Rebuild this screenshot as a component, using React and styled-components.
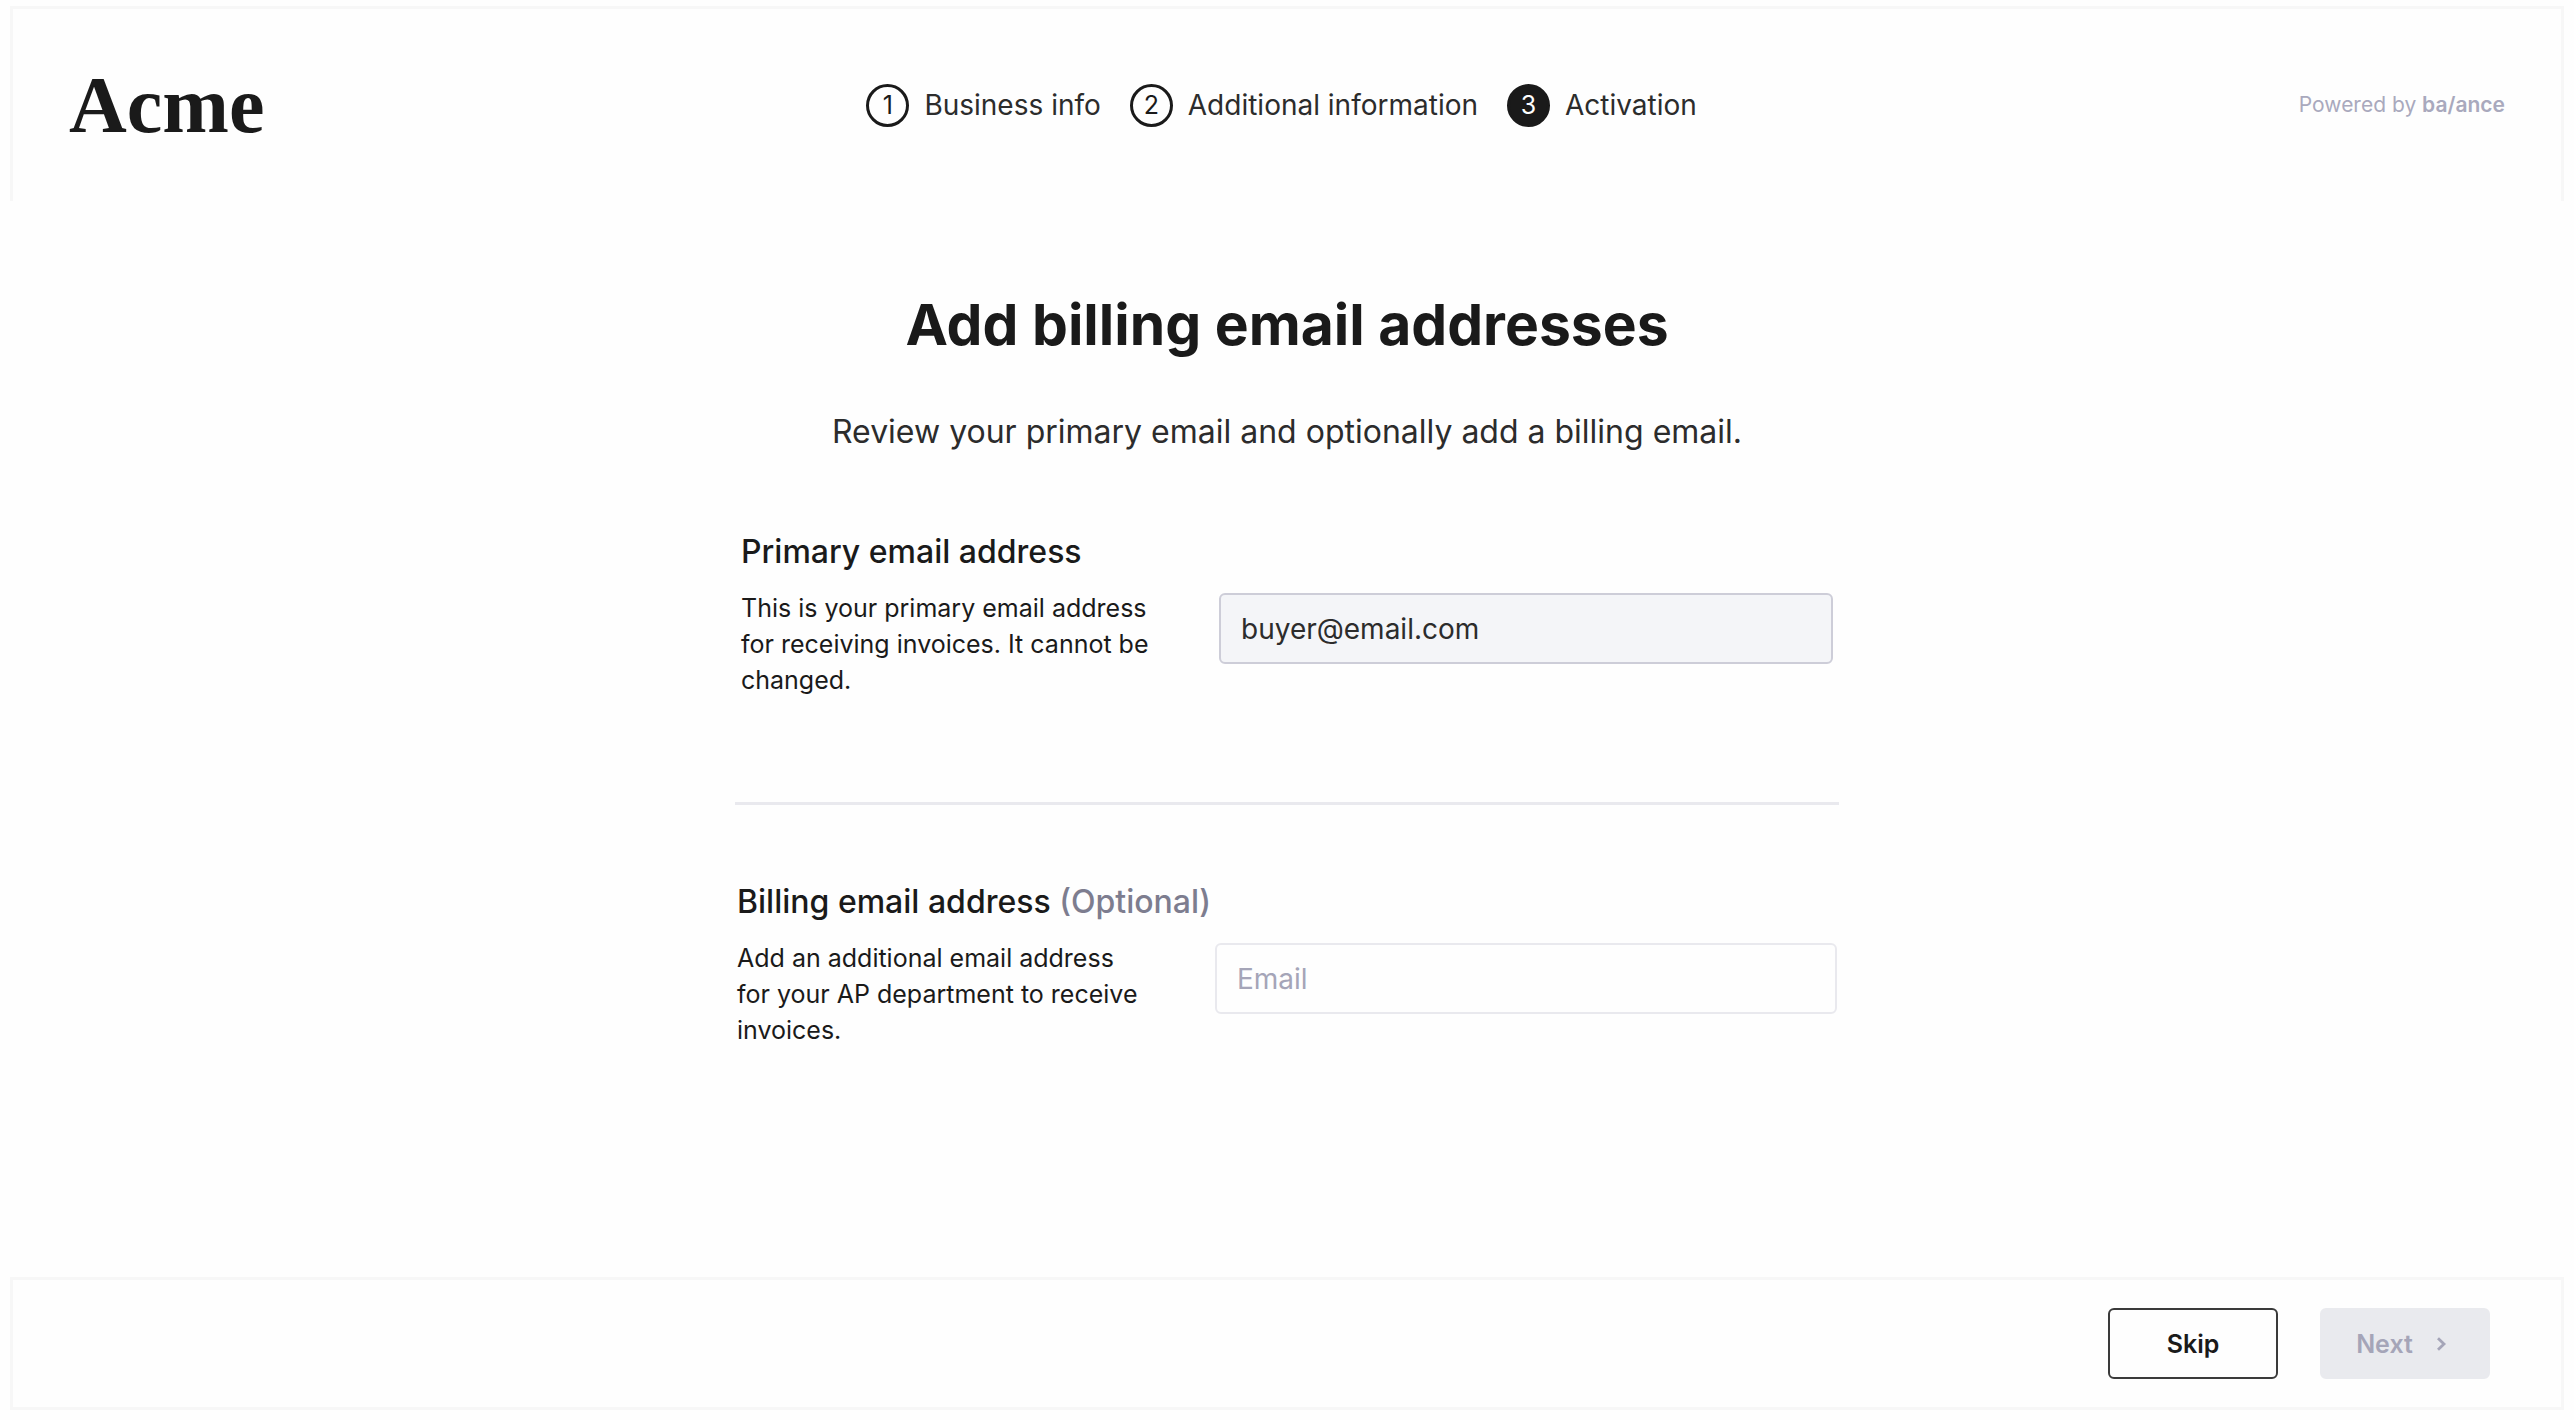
import React from "react";
import styled, { createGlobalStyle } from "styled-components";

const GlobalStyle = createGlobalStyle`
  *, *::before, *::after { box-sizing: border-box; }
  body {
    margin: 0;
    background: #fefefe;
    color: #1a1a1a;
    font-family: Inter, "Liberation Sans", sans-serif;
  }
`;

const Page = styled.div`
  display: flex;
  flex-direction: column;
  min-height: 100vh;
  padding: 6px 10px 10px;
`;

const Header = styled.header`
  display: flex;
  align-items: center;
  justify-content: space-between;
  min-height: 195px;
  padding: 0 56px;
  border: 3px solid #f7f7f7;
  border-bottom: 0;
`;

const Logo = styled.div`
  font-family: "Liberation Serif", serif;
  font-size: 80px;
  font-weight: 700;
  line-height: 88px;
`;

const Steps = styled.ol`
  display: flex;
  gap: 29px;
  margin: 0;
  padding: 0;
  list-style: none;
`;

const Step = styled.li`
  display: flex;
  align-items: center;
  gap: 15px;
  color: #2c2c2c;
  font-size: 28px;
  line-height: 40px;
`;

const StepNumber = styled.span`
  display: flex;
  align-items: center;
  justify-content: center;
  width: 43px;
  height: 43px;
  border: 3px solid #1a1a1a;
  border-radius: 50%;
  background: ${(p) => (p.$active ? "#1a1a1a" : "transparent")};
  color: ${(p) => (p.$active ? "#fefefe" : "#1a1a1a")};
  font-size: 25px;
`;

const PoweredBy = styled.div`
  color: #a9a9bd;
  font-size: 21px;
  line-height: 32px;
`;

const Brand = styled.span`
  font-weight: 600;
`;

const Main = styled.main`
  display: flex;
  flex: 1;
  flex-direction: column;
  align-items: center;
  padding: 90px 24px 80px;
`;

const Title = styled.h1`
  margin: 0 0 53px;
  font-size: 57px;
  font-weight: 700;
  line-height: 68px;
  text-align: center;
`;

const Subtitle = styled.p`
  margin: 0 0 80px;
  color: #2c2c2c;
  font-size: 32px;
  line-height: 40px;
  text-align: center;
`;

const Form = styled.form`
  width: 100%;
  max-width: 1104px;
`;

const Field = styled.div`
  display: grid;
  grid-template-columns: 478px 1fr;
  row-gap: 18px;
  padding: 0 ${(p) => p.$inset}px;
`;

const Label = styled.label`
  grid-column: 1 / -1;
  font-size: 32px;
  font-weight: 500;
  line-height: 40px;
`;

const Optional = styled.span`
  color: #7d7d8f;
`;

const Description = styled.p`
  max-width: 410px;
  margin: 0;
  font-size: 25px;
  line-height: 36px;
`;

const Input = styled.input`
  width: 100%;
  height: 71px;
  margin-top: 3px;
  padding: 0 20px;
  border: 2px solid #e9e9ee;
  border-radius: 6px;
  background: #fefefe;
  color: #2c2c2c;
  font: inherit;
  font-size: 28px;

  &::placeholder {
    color: #a5a5b8;
    opacity: 1;
  }

  &:read-only {
    border-color: #cdcdd8;
    background: #f4f5f8;
  }
`;

const Divider = styled.hr`
  height: 3px;
  margin: 104px 0 77px;
  border: 0;
  background: #e9e9ee;
`;

const Footer = styled.footer`
  display: flex;
  justify-content: flex-end;
  gap: 42px;
  padding: 28px 71px;
  border: 3px solid #f7f7f7;
`;

const Button = styled.button`
  display: flex;
  align-items: center;
  justify-content: center;
  gap: 23px;
  width: 170px;
  height: 71px;
  padding: 0;
  border: 2px solid #3a3a3a;
  border-radius: 6px;
  background: #fefefe;
  color: #1a1a1a;
  font: inherit;
  font-size: 25px;
  font-weight: 600;

  &:disabled {
    border-color: #e9eaee;
    background: #e9eaee;
    color: #a5a5b8;
  }
`;

const steps = ["Business info", "Additional information", "Activation"];

export default function App() {
  return (
    <>
      <GlobalStyle />
      <Page>
        <Header>
          <Logo>Acme</Logo>
          <Steps>
            {steps.map((name, i) => (
              <Step key={name} aria-current={i === 2 ? "step" : undefined}>
                <StepNumber $active={i === 2}>{i + 1}</StepNumber>
                {name}
              </Step>
            ))}
          </Steps>
          <PoweredBy>
            Powered by <Brand>ba/ance</Brand>
          </PoweredBy>
        </Header>
        <Main>
          <Title>Add billing email addresses</Title>
          <Subtitle>Review your primary email and optionally add a billing email.</Subtitle>
          <Form id="billing" onSubmit={(e) => e.preventDefault()}>
            <Field $inset={6}>
              <Label htmlFor="primary-email">Primary email address</Label>
              <Description id="primary-help">
                This is your primary email address for receiving invoices. It cannot be changed.
              </Description>
              <Input
                id="primary-email"
                type="email"
                value="buyer@email.com"
                readOnly
                aria-describedby="primary-help"
              />
            </Field>
            <Divider />
            <Field $inset={2}>
              <Label htmlFor="billing-email">
                Billing email address <Optional>(Optional)</Optional>
              </Label>
              <Description id="billing-help">
                Add an additional email address for your AP department to receive invoices.
              </Description>
              <Input
                id="billing-email"
                type="email"
                placeholder="Email"
                aria-describedby="billing-help"
              />
            </Field>
          </Form>
        </Main>
        <Footer>
          <Button type="button">Skip</Button>
          <Button type="submit" form="billing" disabled>
            Next
            <svg width="18" height="14" viewBox="0 0 18 14" fill="none" aria-hidden="true">
              <path d="M2 1.2 8 7 2 12.8" stroke="currentColor" strokeWidth="2.8" />
            </svg>
          </Button>
        </Footer>
      </Page>
    </>
  );
}
